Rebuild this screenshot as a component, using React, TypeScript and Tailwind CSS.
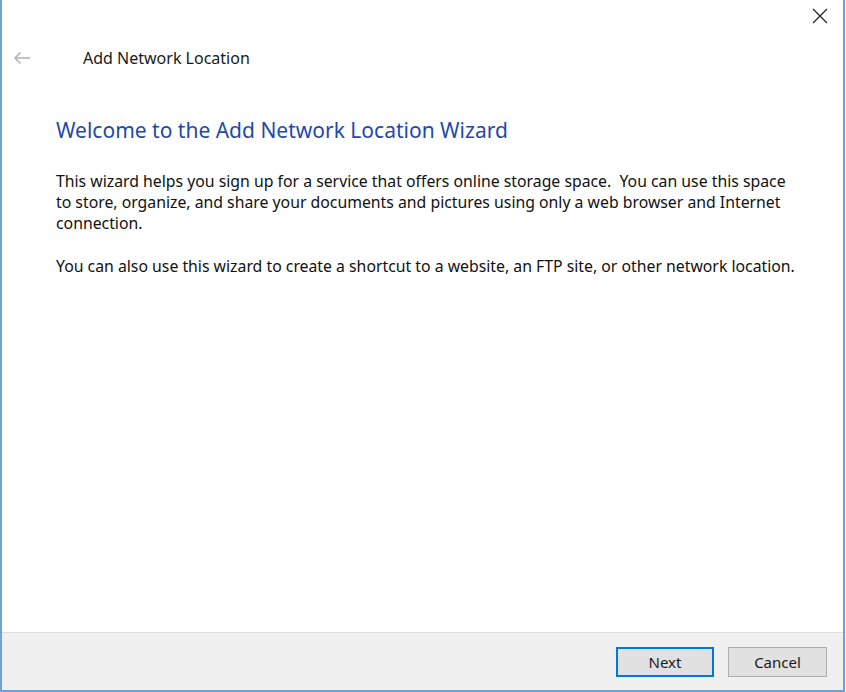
import React from 'react'

const ui = { fontFamily: '"Noto Sans", "Open Sans", sans-serif' }

function BackArrow() {
  return (
    <svg width="18" height="14" viewBox="0 0 18 14" fill="none" stroke="#b4b4b4" strokeWidth="1.6">
      <path d="M17 7H2" />
      <path d="M7.5 1.5L2 7l5.5 5.5" />
    </svg>
  )
}

function CloseGlyph() {
  return (
    <svg width="16" height="16" viewBox="0 0 16 16" fill="none" stroke="#2b2b2b" strokeWidth="1.4">
      <path d="M1 1l14 14M15 1L1 15" />
    </svg>
  )
}

export default function App() {
  return (
    <div className="h-[692px] w-[846px] overflow-hidden bg-white" style={ui}>
      <div className="flex h-full w-[845px] flex-col border-x-2 border-b-2 border-x-[#6fa3d8] border-b-[#6fa3d8] bg-white">
        {/* title strip with close button */}
        <div className="flex h-[31px] justify-end">
          <div className="flex w-[46px] items-center justify-center pt-[1px]">
            <CloseGlyph />
          </div>
        </div>

        {/* wizard header */}
        <div className="flex h-[54px] items-center">
          <div className="ml-[10px] flex w-[20px] justify-center">
            <BackArrow />
          </div>
          <span className="ml-[51px] text-[16px] text-[#1a1a1a]">Add Network Location</span>
        </div>

        {/* body */}
        <div className="flex flex-1 flex-col pl-[54px]">
          <h1 className="mt-[31px] text-[21px] leading-[28px] text-[#1f4aa8]">
            Welcome to the Add Network Location Wizard
          </h1>
          <p className="mt-[27px] whitespace-pre text-[15.8px] leading-[21px] text-[#111]">
            {'This wizard helps you sign up for a service that offers online storage space.  You can use this space\nto store, organize, and share your documents and pictures using only a web browser and Internet\nconnection.'}
          </p>
          <p className="mt-[22px] text-[15.8px] leading-[21px] text-[#111]">
            You can also use this wizard to create a shortcut to a website, an FTP site, or other network location.
          </p>
        </div>

        {/* footer buttons */}
        <div className="flex h-[58px] items-start justify-end gap-[14px] border-t border-[#dedede] bg-[#f0f0f0] pr-[16px] pt-[14px]">
          <button className="h-[30px] w-[98px] border-2 border-[#0078d7] bg-[#e1e1e1] text-[15px] text-[#1a1a1a]">
            Next
          </button>
          <button className="h-[30px] w-[99px] border border-[#adadad] bg-[#e1e1e1] text-[15px] text-[#1a1a1a]">
            Cancel
          </button>
        </div>
      </div>
    </div>
  )
}
